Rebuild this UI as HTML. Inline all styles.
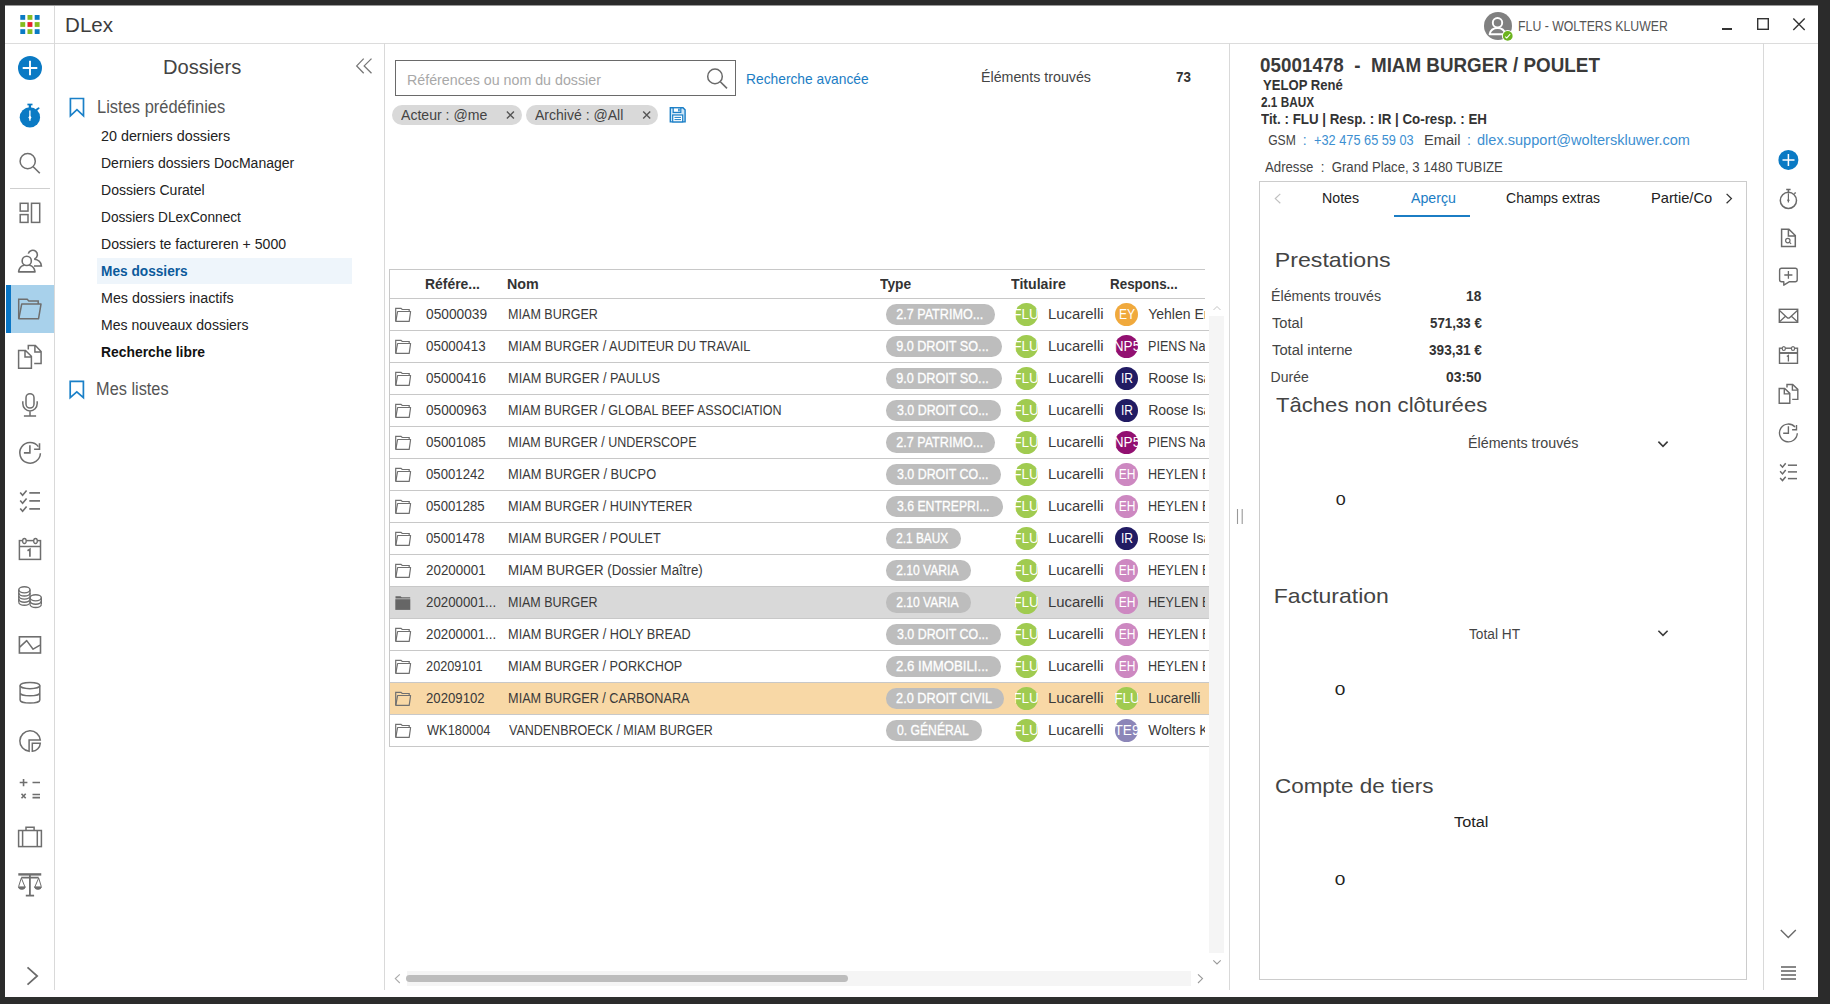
<!DOCTYPE html>
<html><head><meta charset="utf-8"><title>DLex</title>
<style>
html,body{margin:0;padding:0;width:1830px;height:1004px;overflow:hidden;background:#2b2b2b}
body{font-family:"Liberation Sans", sans-serif;position:relative}
#win{position:absolute;left:5px;top:5px;width:1813px;height:992px;background:#fff}
#lay{position:absolute;left:0;top:0;width:1830px;height:1004px}
</style></head><body>
<div id="win"></div>
<div id="lay">
<div style="position:absolute;left:5px;top:990px;width:1813px;height:7px;background:#fcfafc"></div>
<div style="position:absolute;left:5px;top:43px;width:1813px;height:1px;background:#dcdcdc"></div>
<div style="position:absolute;left:54px;top:5px;width:1px;height:985px;background:#d9d9d9"></div>
<div style="position:absolute;left:384px;top:43px;width:1px;height:947px;background:#d9d9d9"></div>
<div style="position:absolute;left:1229px;top:43px;width:1px;height:947px;background:#d9d9d9"></div>
<div style="position:absolute;left:1763px;top:43px;width:1px;height:947px;background:#d9d9d9"></div>
<div style="position:absolute;left:5px;top:5px;width:1813px;height:1px;background:#9a9a9a"></div>
<div style="position:absolute;left:1722px;top:28px;width:10px;height:2px;background:#333"></div>
<div style="position:absolute;left:10px;top:188px;width:40px;height:1px;background:#cfcfcf"></div>
<div style="position:absolute;left:6px;top:285px;width:48px;height:47.5px;background:#a8d1eb"></div>
<div style="position:absolute;left:6px;top:285px;width:5px;height:47.5px;background:#0a76c6"></div>
<div style="position:absolute;left:97px;top:258px;width:254.5px;height:26.3px;background:#eef5fb"></div>
<div style="position:absolute;left:395px;top:60px;width:341px;height:36px;border:1.5px solid #6a6a6a;box-sizing:border-box"></div>
<div style="position:absolute;left:391.9px;top:105.3px;width:129.7px;height:19.4px;background:#d9d9d9;border-radius:10px"></div>
<div style="position:absolute;left:526.1px;top:105.3px;width:132px;height:19.4px;background:#d9d9d9;border-radius:10px"></div>
<div style="position:absolute;left:389px;top:269px;width:816px;height:1px;background:#c8c8c8"></div>
<div style="position:absolute;left:389px;top:269px;width:1px;height:477.5px;background:#c8c8c8"></div>
<div style="position:absolute;left:389px;top:298px;width:816px;height:1px;background:#c8c8c8"></div>
<div style="position:absolute;left:390px;top:330px;width:819px;height:1px;background:#c8c8c8"></div>
<div style="position:absolute;left:886px;top:304.2px;width:109.4px;height:20.6px;background:#bdbdbd;border-radius:10.3px"></div>
<div style="position:absolute;left:1015px;top:303px;width:22.8px;height:22.8px;background:#a0cb50;border-radius:50%"></div>
<div style="position:absolute;left:1115.2px;top:303px;width:22.8px;height:22.8px;background:#f0a93c;border-radius:50%"></div>
<div style="position:absolute;left:390px;top:362px;width:819px;height:1px;background:#c8c8c8"></div>
<div style="position:absolute;left:886px;top:336.2px;width:115.6px;height:20.6px;background:#bdbdbd;border-radius:10.3px"></div>
<div style="position:absolute;left:1015px;top:335px;width:22.8px;height:22.8px;background:#a0cb50;border-radius:50%"></div>
<div style="position:absolute;left:1115.2px;top:335px;width:22.8px;height:22.8px;background:#921071;border-radius:50%"></div>
<div style="position:absolute;left:390px;top:394px;width:819px;height:1px;background:#c8c8c8"></div>
<div style="position:absolute;left:886px;top:368.2px;width:115.6px;height:20.6px;background:#bdbdbd;border-radius:10.3px"></div>
<div style="position:absolute;left:1015px;top:367px;width:22.8px;height:22.8px;background:#a0cb50;border-radius:50%"></div>
<div style="position:absolute;left:1115.2px;top:367px;width:22.8px;height:22.8px;background:#211b63;border-radius:50%"></div>
<div style="position:absolute;left:390px;top:426px;width:819px;height:1px;background:#c8c8c8"></div>
<div style="position:absolute;left:886px;top:400.2px;width:115px;height:20.6px;background:#bdbdbd;border-radius:10.3px"></div>
<div style="position:absolute;left:1015px;top:399px;width:22.8px;height:22.8px;background:#a0cb50;border-radius:50%"></div>
<div style="position:absolute;left:1115.2px;top:399px;width:22.8px;height:22.8px;background:#211b63;border-radius:50%"></div>
<div style="position:absolute;left:390px;top:458px;width:819px;height:1px;background:#c8c8c8"></div>
<div style="position:absolute;left:886px;top:432.2px;width:109.4px;height:20.6px;background:#bdbdbd;border-radius:10.3px"></div>
<div style="position:absolute;left:1015px;top:431px;width:22.8px;height:22.8px;background:#a0cb50;border-radius:50%"></div>
<div style="position:absolute;left:1115.2px;top:431px;width:22.8px;height:22.8px;background:#921071;border-radius:50%"></div>
<div style="position:absolute;left:390px;top:490px;width:819px;height:1px;background:#c8c8c8"></div>
<div style="position:absolute;left:886px;top:464.2px;width:115px;height:20.6px;background:#bdbdbd;border-radius:10.3px"></div>
<div style="position:absolute;left:1015px;top:463px;width:22.8px;height:22.8px;background:#a0cb50;border-radius:50%"></div>
<div style="position:absolute;left:1115.2px;top:463px;width:22.8px;height:22.8px;background:#cd88c1;border-radius:50%"></div>
<div style="position:absolute;left:390px;top:522px;width:819px;height:1px;background:#c8c8c8"></div>
<div style="position:absolute;left:886px;top:496.2px;width:116.6px;height:20.6px;background:#bdbdbd;border-radius:10.3px"></div>
<div style="position:absolute;left:1015px;top:495px;width:22.8px;height:22.8px;background:#a0cb50;border-radius:50%"></div>
<div style="position:absolute;left:1115.2px;top:495px;width:22.8px;height:22.8px;background:#cd88c1;border-radius:50%"></div>
<div style="position:absolute;left:390px;top:554px;width:819px;height:1px;background:#c8c8c8"></div>
<div style="position:absolute;left:886px;top:528.2px;width:75px;height:20.6px;background:#bdbdbd;border-radius:10.3px"></div>
<div style="position:absolute;left:1015px;top:527px;width:22.8px;height:22.8px;background:#a0cb50;border-radius:50%"></div>
<div style="position:absolute;left:1115.2px;top:527px;width:22.8px;height:22.8px;background:#211b63;border-radius:50%"></div>
<div style="position:absolute;left:390px;top:586px;width:819px;height:1px;background:#c8c8c8"></div>
<div style="position:absolute;left:886px;top:560.2px;width:85.4px;height:20.6px;background:#bdbdbd;border-radius:10.3px"></div>
<div style="position:absolute;left:1015px;top:559px;width:22.8px;height:22.8px;background:#a0cb50;border-radius:50%"></div>
<div style="position:absolute;left:1115.2px;top:559px;width:22.8px;height:22.8px;background:#cd88c1;border-radius:50%"></div>
<div style="position:absolute;left:390px;top:586.5px;width:819px;height:32px;background:#d9d9d9"></div>
<div style="position:absolute;left:390px;top:618px;width:819px;height:1px;background:#c8c8c8"></div>
<div style="position:absolute;left:886px;top:592.2px;width:85.4px;height:20.6px;background:#bdbdbd;border-radius:10.3px"></div>
<div style="position:absolute;left:1015px;top:591px;width:22.8px;height:22.8px;background:#a0cb50;border-radius:50%"></div>
<div style="position:absolute;left:1115.2px;top:591px;width:22.8px;height:22.8px;background:#cd88c1;border-radius:50%"></div>
<div style="position:absolute;left:390px;top:650px;width:819px;height:1px;background:#c8c8c8"></div>
<div style="position:absolute;left:886px;top:624.2px;width:115px;height:20.6px;background:#bdbdbd;border-radius:10.3px"></div>
<div style="position:absolute;left:1015px;top:623px;width:22.8px;height:22.8px;background:#a0cb50;border-radius:50%"></div>
<div style="position:absolute;left:1115.2px;top:623px;width:22.8px;height:22.8px;background:#cd88c1;border-radius:50%"></div>
<div style="position:absolute;left:390px;top:682px;width:819px;height:1px;background:#c8c8c8"></div>
<div style="position:absolute;left:886px;top:656.2px;width:115px;height:20.6px;background:#bdbdbd;border-radius:10.3px"></div>
<div style="position:absolute;left:1015px;top:655px;width:22.8px;height:22.8px;background:#a0cb50;border-radius:50%"></div>
<div style="position:absolute;left:1115.2px;top:655px;width:22.8px;height:22.8px;background:#cd88c1;border-radius:50%"></div>
<div style="position:absolute;left:390px;top:682.5px;width:819px;height:32px;background:#f8d8a6"></div>
<div style="position:absolute;left:390px;top:714px;width:819px;height:1px;background:#c8c8c8"></div>
<div style="position:absolute;left:886px;top:688.2px;width:118px;height:20.6px;background:#bdbdbd;border-radius:10.3px"></div>
<div style="position:absolute;left:1015px;top:687px;width:22.8px;height:22.8px;background:#a0cb50;border-radius:50%"></div>
<div style="position:absolute;left:1115.2px;top:687px;width:22.8px;height:22.8px;background:#a0cb50;border-radius:50%"></div>
<div style="position:absolute;left:390px;top:746px;width:819px;height:1px;background:#c8c8c8"></div>
<div style="position:absolute;left:886px;top:720.2px;width:95.7px;height:20.6px;background:#bdbdbd;border-radius:10.3px"></div>
<div style="position:absolute;left:1015px;top:719px;width:22.8px;height:22.8px;background:#a0cb50;border-radius:50%"></div>
<div style="position:absolute;left:1115.2px;top:719px;width:22.8px;height:22.8px;background:#8c86b8;border-radius:50%"></div>
<div style="position:absolute;left:1209px;top:316px;width:15px;height:637px;background:#f5f5f5"></div>
<div style="position:absolute;left:407px;top:971px;width:784px;height:15px;background:#f5f5f5"></div>
<div style="position:absolute;left:406px;top:975.4px;width:442px;height:6.8px;background:#bdbdbd;border-radius:3.4px"></div>
<div style="position:absolute;left:1259px;top:181px;width:488px;height:799px;border:1px solid #cccccc;box-sizing:border-box"></div>
<div style="position:absolute;left:1394px;top:214.6px;width:76px;height:2.4px;background:#1b7dc4"></div>
<div style="position:absolute;left:1780.5px;top:966.2px;width:15.8px;height:1.6px;background:#888"></div>
<div style="position:absolute;left:1780.5px;top:970.2px;width:15.8px;height:1.6px;background:#888"></div>
<div style="position:absolute;left:1780.5px;top:974.2px;width:15.8px;height:1.6px;background:#888"></div>
<div style="position:absolute;left:1780.5px;top:978.2px;width:15.8px;height:1.6px;background:#888"></div>
<svg width="1830" height="1004" style="position:absolute;left:0;top:0">
<rect x="20.30" y="15.00" width="4.9" height="4.8" fill="#0a7ac4"/>
<rect x="27.50" y="15.00" width="4.9" height="4.8" fill="#85bc20"/>
<rect x="34.70" y="15.00" width="4.9" height="4.8" fill="#0a7ac4"/>
<rect x="20.30" y="22.10" width="4.9" height="4.8" fill="#85bc20"/>
<rect x="27.50" y="22.10" width="4.9" height="4.8" fill="#e5202e"/>
<rect x="34.70" y="22.10" width="4.9" height="4.8" fill="#85bc20"/>
<rect x="20.30" y="29.20" width="4.9" height="4.8" fill="#0a7ac4"/>
<rect x="27.50" y="29.20" width="4.9" height="4.8" fill="#85bc20"/>
<rect x="34.70" y="29.20" width="4.9" height="4.8" fill="#0a7ac4"/>
<circle cx="1498" cy="26" r="14" fill="#808080"/>
<circle cx="1497.5" cy="22.7" r="4.7" fill="none" stroke="#fff" stroke-width="1.9"/>
<path d="M1489.6 34.3 C1490.5 30 1493.5 28 1497.5 28 C1501.5 28 1504.5 30 1505.4 34.3 Z" fill="none" stroke="#fff" stroke-width="1.9" stroke-linejoin="round"/>
<circle cx="1507.7" cy="35.9" r="5.8" fill="#fff"/>
<circle cx="1507.7" cy="35.9" r="4.9" fill="#6cb31e"/>
<path d="M1505.2 36.6 L1506.8 37.9 L1510.2 34.2" fill="none" stroke="#fff" stroke-width="1.1"/>
<rect x="1757.7" y="18.7" width="10.6" height="10.6" fill="none" stroke="#333" stroke-width="1.4"/>
<path d="M1793.3 18.6 L1804.7 30 M1804.7 18.6 L1793.3 30" stroke="#333" stroke-width="1.4"/>
<circle cx="30" cy="68" r="12" fill="#0a7ac4"/>
<path d="M22.7 68 H37.3 M30 60.7 V75.3" stroke="#fff" stroke-width="1.9"/>
<circle cx="29.9" cy="117.4" r="10.2" fill="#0a7ac4"/>
<path d="M27.4 104.5 H32.5" stroke="#0a7ac4" stroke-width="1.7"/><path d="M29.9 104.5 V108.5" stroke="#0a7ac4" stroke-width="2.3"/>
<path d="M36.4 109.8 L38.6 108.2" stroke="#0a7ac4" stroke-width="1.9" stroke-linecap="round"/>
<path d="M29.9 110.4 V120.7" stroke="#fff" stroke-width="1.3"/>
<path d="M28.3 117.5 L29.9 115.5 L31.5 117.5 L29.9 119.5 Z" fill="#fff"/>
<circle cx="27.7" cy="161.2" r="7.6" fill="none" stroke="#6e6e6e" stroke-width="1.5"/>
<path d="M33.2 166.7 L39.8 173.3" stroke="#6e6e6e" stroke-width="1.6"/>
<rect x="20.2" y="203.3" width="7.8" height="7.8" fill="none" stroke="#6e6e6e" stroke-width="1.5"/>
<rect x="20.2" y="214.6" width="7.8" height="7.8" fill="none" stroke="#6e6e6e" stroke-width="1.5"/>
<rect x="31.5" y="203.3" width="8.2" height="19.1" fill="none" stroke="#6e6e6e" stroke-width="1.5"/>
<circle cx="26.75" cy="260.9" r="4.6" fill="none" stroke="#6e6e6e" stroke-width="1.6"/>
<path d="M24.3 265.3 C22 265.6 19.2 267.8 18.6 271.9 H35 C34.4 267.8 31.6 265.6 29.2 265.3" fill="none" stroke="#6e6e6e" stroke-width="1.6" stroke-linejoin="round"/>
<path d="M28.3 253.6 A4.6 4.6 0 1 1 34.4 259.1" fill="none" stroke="#6e6e6e" stroke-width="1.6"/>
<path d="M34.2 259.3 C38 259.6 41 262 41.4 266 H34" fill="none" stroke="#6e6e6e" stroke-width="1.6"/>
<path d="M18.7 318.8 V299.3 H27.2 L28.8 301 H38.2 V304" fill="none" stroke="#6e6e6e" stroke-width="1.5"/>
<path d="M21.7 304.1 H41 L38.5 318.8 H18.8 Z" fill="none" stroke="#6e6e6e" stroke-width="1.5" stroke-linejoin="round"/>
<path d="M18.6 350.4 H25.5 L31.4 356.3 V368.2 H18.6 Z M25 350.6 V356.9 H31.4" fill="none" stroke="#6e6e6e" stroke-width="1.5"/>
<path d="M28.3 349.4 V345.6 H35.4 L41.1 351.5 V363.4 H34.2 M34.9 345.8 V352.1 H41.1" fill="none" stroke="#6e6e6e" stroke-width="1.5"/>
<rect x="26" y="393.7" width="8" height="14.4" rx="4" fill="none" stroke="#6e6e6e" stroke-width="1.5"/>
<path d="M22.8 401.2 V403.6 A7.2 7.4 0 0 0 37.2 403.6 V401.2 M30 411 V416.1 M23.9 416.1 H36.1" fill="none" stroke="#6e6e6e" stroke-width="1.5"/>
<path d="M40.4 453.3 A10.3 10.3 0 1 1 38.3 446.6" fill="none" stroke="#6e6e6e" stroke-width="1.5"/>
<path d="M39.5 443.2 V449.2 H34.1 M29.9 445.2 V452.9 H23.9" fill="none" stroke="#6e6e6e" stroke-width="1.6"/>
<path d="M20.2 492.4 L22.6 495.3 L26.6 490.5" fill="none" stroke="#6e6e6e" stroke-width="1.6"/>
<path d="M29.3 492.9 H40" stroke="#6e6e6e" stroke-width="1.7"/>
<path d="M20.2 500.4 L22.6 503.3 L26.6 498.5" fill="none" stroke="#6e6e6e" stroke-width="1.6"/>
<path d="M29.3 500.9 H40" stroke="#6e6e6e" stroke-width="1.7"/>
<path d="M20.2 508.4 L22.6 511.3 L26.6 506.5" fill="none" stroke="#6e6e6e" stroke-width="1.6"/>
<path d="M29.3 508.9 H40" stroke="#6e6e6e" stroke-width="1.7"/>
<rect x="19.4" y="540.6" width="21.1" height="18.8" fill="none" stroke="#6e6e6e" stroke-width="1.5"/>
<path d="M19.4 546.5 H40.5" stroke="#6e6e6e" stroke-width="1.5"/>
<ellipse cx="24.4" cy="541" rx="1.8" ry="2.5" fill="#fff" stroke="#6e6e6e" stroke-width="1.3"/>
<ellipse cx="35.5" cy="541" rx="1.8" ry="2.5" fill="#fff" stroke="#6e6e6e" stroke-width="1.3"/>
<path d="M27.5 550.8 L29.9 549.3 V556.7" fill="none" stroke="#6e6e6e" stroke-width="1.7"/>
<ellipse cx="24.4" cy="589.8" rx="5.6" ry="3.1" fill="#fff" stroke="#6e6e6e" stroke-width="1.4"/><path d="M18.799999999999997 592.9 A5.6 3.1 0 0 0 30.0 592.9" fill="none" stroke="#6e6e6e" stroke-width="1.4"/><path d="M18.799999999999997 596.0 A5.6 3.1 0 0 0 30.0 596.0" fill="none" stroke="#6e6e6e" stroke-width="1.4"/><path d="M18.799999999999997 599.0999999999999 A5.6 3.1 0 0 0 30.0 599.0999999999999" fill="none" stroke="#6e6e6e" stroke-width="1.4"/><path d="M18.799999999999997 602.1999999999999 A5.6 3.1 0 0 0 30.0 602.1999999999999" fill="none" stroke="#6e6e6e" stroke-width="1.4"/><path d="M18.799999999999997 589.8 V602.1999999999999 M30.0 589.8 V602.1999999999999" stroke="#6e6e6e" stroke-width="1.4"/>
<rect x="29.8" y="596" width="12" height="12" fill="#fff"/>
<ellipse cx="35.7" cy="597.8" rx="5.6" ry="3.1" fill="#fff" stroke="#6e6e6e" stroke-width="1.4"/><path d="M30.1 601.0999999999999 A5.6 3.1 0 0 0 41.300000000000004 601.0999999999999" fill="none" stroke="#6e6e6e" stroke-width="1.4"/><path d="M30.1 604.4 A5.6 3.1 0 0 0 41.300000000000004 604.4" fill="none" stroke="#6e6e6e" stroke-width="1.4"/><path d="M30.1 597.8 V604.4 M41.300000000000004 597.8 V604.4" stroke="#6e6e6e" stroke-width="1.4"/>
<rect x="19.4" y="636.8" width="21.1" height="16.2" fill="none" stroke="#6e6e6e" stroke-width="1.6"/>
<path d="M19.7 647.1 L26.7 640.6 L33.1 649.2 L40 645.2" fill="none" stroke="#6e6e6e" stroke-width="1.5" stroke-linejoin="round"/>
<ellipse cx="29.95" cy="685.6" rx="9.85" ry="3.1" fill="none" stroke="#6e6e6e" stroke-width="1.5"/>
<path d="M20.1 685.6 V700 A9.85 3.1 0 0 0 39.8 700 V685.6 M20.1 692.7 A9.85 3.1 0 0 0 39.8 692.7" fill="none" stroke="#6e6e6e" stroke-width="1.5"/>
<path d="M29.1 751.3 A10.25 10.25 0 1 1 40.3 740.1 H29.1 Z" fill="none" stroke="#6e6e6e" stroke-width="1.5" stroke-linejoin="miter"/>
<path d="M32.3 743.2 H40.3 A8.6 8.6 0 0 1 32.3 751.3 Z" fill="none" stroke="#6e6e6e" stroke-width="1.5"/>
<path d="M19.7 782.5 H27.4 M23.55 778.9 V786.2 M32.5 782.5 H40 M21.5 793.7 L25.7 798.2 M25.7 793.7 L21.5 798.2 M32.5 794.5 H40 M32.5 797.6 H40" stroke="#6e6e6e" stroke-width="1.6"/>
<rect x="18.6" y="830.5" width="22.8" height="16.1" fill="none" stroke="#6e6e6e" stroke-width="1.5"/>
<path d="M26 830.5 V827.3 H34.1 V830.5 M22.6 830.5 V846.6 M37.3 830.5 V846.6" fill="none" stroke="#6e6e6e" stroke-width="1.5"/>
<path d="M18.3 874.4 H41.25" stroke="#6e6e6e" stroke-width="2.4"/>
<path d="M21.2 877.6 H38.7 M29.9 874 V895.6 " stroke="#6e6e6e" stroke-width="1.8"/>
<path d="M25.8 895.6 H34.1" stroke="#6e6e6e" stroke-width="1.8"/>
<path d="M21.3 878 L18.6 886.6 M21.3 878 L25 887 M38.7 878 L34.8 887 M38.7 878 L41.3 886.6" stroke="#6e6e6e" stroke-width="1"/>
<path d="M18.4 886.9 H25.3 Q25 889.3 21.85 889.3 Q18.7 889.3 18.4 886.9 Z M34.5 886.9 H41.4 Q41.1 889.3 37.95 889.3 Q34.8 889.3 34.5 886.9 Z" fill="#6e6e6e" stroke="#6e6e6e" stroke-width="1"/>
<path d="M27.5 967.3 L37.2 976 L27.5 984.7" fill="none" stroke="#6a6a6a" stroke-width="1.7"/>
<path d="M363.7 58.6 L356.7 65.9 L363.7 73.3 M371.5 58.6 L364.2 65.9 L371.5 73.3" fill="none" stroke="#777" stroke-width="1.3"/>
<path d="M70.4 98.5 H83.5 V115.75 L76.95 109.6 L70.4 115.75 Z" fill="none" stroke="#1a80c8" stroke-width="1.7"/>
<path d="M70.2 381.3 H83.4 V397.6 L76.8 391.8 L70.2 397.6 Z" fill="none" stroke="#1a80c8" stroke-width="1.7"/>
<circle cx="715" cy="76.4" r="7.3" fill="none" stroke="#6a6a6a" stroke-width="1.5"/>
<path d="M720.3 81.7 L727 88.4" stroke="#6a6a6a" stroke-width="1.6"/>
<path d="M506.9 111.6 L513.9 118.6 M513.9 111.6 L506.9 118.6" stroke="#555" stroke-width="1.4"/>
<path d="M643.2 111.6 L650.2 118.6 M650.2 111.6 L643.2 118.6" stroke="#555" stroke-width="1.4"/>
<path d="M670.3 107.8 H683 L685.1 109.9 V121.9 H670.3 Z" fill="#cfe6f7" stroke="#1a7ec6" stroke-width="1.4"/>
<rect x="673.2" y="107.8" width="7.6" height="4.6" fill="#fff" stroke="#1a7ec6" stroke-width="1.2"/>
<rect x="678.2" y="108.6" width="1.5" height="2.8" fill="#1a7ec6"/>
<rect x="672.7" y="115" width="10" height="6.9" fill="#fff" stroke="#1a7ec6" stroke-width="1.2"/>
<path d="M674.5 117.4 H681 M674.5 119.6 H681" stroke="#1a7ec6" stroke-width="1"/>
<path d="M395.7 321.3 V308.3 H401 L402.2 309.5 H409.2 V311.3" fill="none" stroke="#707070" stroke-width="1.2"/>
<path d="M397.6 311.5 H410.6 L409.2 321.3 H395.8 Z" fill="none" stroke="#707070" stroke-width="1.2" stroke-linejoin="round"/>
<path d="M395.7 353.3 V340.3 H401 L402.2 341.5 H409.2 V343.3" fill="none" stroke="#707070" stroke-width="1.2"/>
<path d="M397.6 343.5 H410.6 L409.2 353.3 H395.8 Z" fill="none" stroke="#707070" stroke-width="1.2" stroke-linejoin="round"/>
<path d="M395.7 385.3 V372.3 H401 L402.2 373.5 H409.2 V375.3" fill="none" stroke="#707070" stroke-width="1.2"/>
<path d="M397.6 375.5 H410.6 L409.2 385.3 H395.8 Z" fill="none" stroke="#707070" stroke-width="1.2" stroke-linejoin="round"/>
<path d="M395.7 417.3 V404.3 H401 L402.2 405.5 H409.2 V407.3" fill="none" stroke="#707070" stroke-width="1.2"/>
<path d="M397.6 407.5 H410.6 L409.2 417.3 H395.8 Z" fill="none" stroke="#707070" stroke-width="1.2" stroke-linejoin="round"/>
<path d="M395.7 449.3 V436.3 H401 L402.2 437.5 H409.2 V439.3" fill="none" stroke="#707070" stroke-width="1.2"/>
<path d="M397.6 439.5 H410.6 L409.2 449.3 H395.8 Z" fill="none" stroke="#707070" stroke-width="1.2" stroke-linejoin="round"/>
<path d="M395.7 481.3 V468.3 H401 L402.2 469.5 H409.2 V471.3" fill="none" stroke="#707070" stroke-width="1.2"/>
<path d="M397.6 471.5 H410.6 L409.2 481.3 H395.8 Z" fill="none" stroke="#707070" stroke-width="1.2" stroke-linejoin="round"/>
<path d="M395.7 513.3 V500.3 H401 L402.2 501.5 H409.2 V503.3" fill="none" stroke="#707070" stroke-width="1.2"/>
<path d="M397.6 503.5 H410.6 L409.2 513.3 H395.8 Z" fill="none" stroke="#707070" stroke-width="1.2" stroke-linejoin="round"/>
<path d="M395.7 545.3 V532.3 H401 L402.2 533.5 H409.2 V535.3" fill="none" stroke="#707070" stroke-width="1.2"/>
<path d="M397.6 535.5 H410.6 L409.2 545.3 H395.8 Z" fill="none" stroke="#707070" stroke-width="1.2" stroke-linejoin="round"/>
<path d="M395.7 577.3 V564.3 H401 L402.2 565.5 H409.2 V567.3" fill="none" stroke="#707070" stroke-width="1.2"/>
<path d="M397.6 567.5 H410.6 L409.2 577.3 H395.8 Z" fill="none" stroke="#707070" stroke-width="1.2" stroke-linejoin="round"/>
<path d="M395.5 596.2 H400.5 L401.7 597.3 H410.2 V598.4 H395.5 Z" fill="#666"/>
<rect x="395.3" y="599.2" width="15" height="10.7" fill="#666"/>
<path d="M395.7 641.3 V628.3 H401 L402.2 629.5 H409.2 V631.3" fill="none" stroke="#707070" stroke-width="1.2"/>
<path d="M397.6 631.5 H410.6 L409.2 641.3 H395.8 Z" fill="none" stroke="#707070" stroke-width="1.2" stroke-linejoin="round"/>
<path d="M395.7 673.3 V660.3 H401 L402.2 661.5 H409.2 V663.3" fill="none" stroke="#707070" stroke-width="1.2"/>
<path d="M397.6 663.5 H410.6 L409.2 673.3 H395.8 Z" fill="none" stroke="#707070" stroke-width="1.2" stroke-linejoin="round"/>
<path d="M395.7 705.3 V692.3 H401 L402.2 693.5 H409.2 V695.3" fill="none" stroke="#707070" stroke-width="1.2"/>
<path d="M397.6 695.5 H410.6 L409.2 705.3 H395.8 Z" fill="none" stroke="#707070" stroke-width="1.2" stroke-linejoin="round"/>
<path d="M395.7 737.3 V724.3 H401 L402.2 725.5 H409.2 V727.3" fill="none" stroke="#707070" stroke-width="1.2"/>
<path d="M397.6 727.5 H410.6 L409.2 737.3 H395.8 Z" fill="none" stroke="#707070" stroke-width="1.2" stroke-linejoin="round"/>
<path d="M1213.5 310 L1217 306.5 L1220.5 310" fill="none" stroke="#c4c4c4" stroke-width="1"/>
<path d="M1213.3 960.3 L1217 964 L1220.7 960.3" fill="none" stroke="#999" stroke-width="1.1"/>
<path d="M399.8 974.3 L395.3 978.6 L399.8 983" fill="none" stroke="#aaa" stroke-width="1.1"/>
<path d="M1198 974.3 L1202.5 978.6 L1198 983" fill="none" stroke="#999" stroke-width="1.1"/>
<path d="M1237.5 509 V524 M1242.2 509 V524" stroke="#999" stroke-width="1.1"/>
<path d="M1280.3 193.9 L1275.3 198.6 L1280.3 203.3" fill="none" stroke="#c0c0c0" stroke-width="1.2"/>
<path d="M1726.6 193.9 L1731.4 198.6 L1726.6 203.3" fill="none" stroke="#333" stroke-width="1.3"/>
<path d="M1658.4 441.6 L1663 446.3 L1667.6 441.6" fill="none" stroke="#3a3a3a" stroke-width="1.6"/>
<path d="M1658.4 630.8 L1663 635.4 L1667.6 630.8" fill="none" stroke="#3a3a3a" stroke-width="1.6"/>
<circle cx="1788.4" cy="159.9" r="10" fill="#0a7ac4"/>
<path d="M1782.5 160.1 H1794.5 M1788.4 154.1 V166.1" stroke="#fff" stroke-width="1.5"/>
<circle cx="1788.4" cy="200.4" r="8.1" fill="none" stroke="#6a6a6a" stroke-width="1.5"/>
<path d="M1786.2 189.4 H1790.6 M1788.4 189.4 V192.3 M1794.3 193.8 L1795.7 192.5" stroke="#6a6a6a" stroke-width="1.5"/>
<path d="M1788.4 193.2 V202.6" stroke="#6a6a6a" stroke-width="1.2"/>
<path d="M1787.1 200.3 L1788.4 198.6 L1789.7 200.3 L1788.4 202 Z" fill="#6a6a6a"/>
<path d="M1781.6 229.3 H1788.9 L1795.3 235.5 V246.5 H1781.6 Z M1788.4 229.6 V236 H1795.3" fill="none" stroke="#6a6a6a" stroke-width="1.5"/>
<circle cx="1787.8" cy="240.6" r="2.2" fill="none" stroke="#6a6a6a" stroke-width="1.2"/><path d="M1789.4 242.2 L1791.1 243.9" stroke="#6a6a6a" stroke-width="1.2"/>
<path d="M1781.6 268.3 H1795.2 Q1797.2 268.3 1797.2 270.3 V279.7 Q1797.2 281.7 1795.2 281.7 H1789.5 L1783.8 285.2 V281.7 H1781.6 Q1779.6 281.7 1779.6 279.7 V270.3 Q1779.6 268.3 1781.6 268.3 Z" fill="none" stroke="#6a6a6a" stroke-width="1.4" stroke-linejoin="round"/>
<path d="M1784.3 275 H1792.4 M1788.4 271 V278.8" stroke="#6a6a6a" stroke-width="1.3"/>
<rect x="1779.3" y="309.3" width="18.4" height="13" fill="none" stroke="#6a6a6a" stroke-width="1.4"/>
<path d="M1779.5 310.5 L1787 317.5 Q1788.4 318.8 1789.8 317.5 L1797.4 310.5 M1779.5 321.7 L1785.2 316.6 M1797.4 321.7 L1791.7 316.6" fill="none" stroke="#6a6a6a" stroke-width="1.3"/>
<rect x="1779.5" y="348.2" width="18" height="15.1" fill="none" stroke="#6a6a6a" stroke-width="1.4"/>
<path d="M1779.5 353 H1797.5" stroke="#6a6a6a" stroke-width="1.9"/>
<ellipse cx="1783.8" cy="348.6" rx="1.6" ry="1.9" fill="#fff" stroke="#6a6a6a" stroke-width="1.2"/><ellipse cx="1793" cy="348.6" rx="1.6" ry="1.9" fill="#fff" stroke="#6a6a6a" stroke-width="1.2"/>
<path d="M1786.8 356.5 L1788.4 355.5 V361.6" fill="none" stroke="#6a6a6a" stroke-width="1.3"/>
<path d="M1779.2 388.5 H1784.7 L1789.8 393.4 V403.3 H1779.2 Z M1784.3 388.7 V393.9 H1789.8" fill="none" stroke="#6a6a6a" stroke-width="1.4"/>
<path d="M1787 387.6 V384.5 H1792.7 L1797.8 389.4 V399.4 H1792.2 M1792.4 384.7 V390.1 H1797.8" fill="none" stroke="#6a6a6a" stroke-width="1.4"/>
<path d="M1797.3 433.3 A8.9 8.9 0 1 1 1795 427" fill="none" stroke="#6a6a6a" stroke-width="1.4"/>
<path d="M1796.5 424.9 V429.7 H1792.1 M1788.4 426.2 V433.2 H1783.2" fill="none" stroke="#6a6a6a" stroke-width="1.4"/>
<path d="M1780.1 464.6 L1782.5 467.2 L1785.7 463.3" fill="none" stroke="#6a6a6a" stroke-width="1.5"/>
<path d="M1787.9 465.2 H1797" stroke="#6a6a6a" stroke-width="1.5"/>
<path d="M1780.1 471.3 L1782.5 473.9 L1785.7 470.0" fill="none" stroke="#6a6a6a" stroke-width="1.5"/>
<path d="M1787.9 471.9 H1797" stroke="#6a6a6a" stroke-width="1.5"/>
<path d="M1780.1 478.0 L1782.5 480.59999999999997 L1785.7 476.7" fill="none" stroke="#6a6a6a" stroke-width="1.5"/>
<path d="M1787.9 478.59999999999997 H1797" stroke="#6a6a6a" stroke-width="1.5"/>
<path d="M1780.8 930 L1788.3 937.5 L1795.8 930" fill="none" stroke="#6a6a6a" stroke-width="1.4"/>
</svg>
<div id="t0" style="left:65.1px;position:absolute;top:13.95px;font-size:21px;line-height:21px;color:#3c3c3c;font-weight:400;white-space:nowrap;;transform:scaleX(0.9787);transform-origin:2px 0;">DLex</div>
<div id="t1" style="left:1518.1px;position:absolute;top:19.20px;font-size:14px;line-height:14px;color:#555;font-weight:400;white-space:nowrap;;transform:scaleX(0.8757);transform-origin:1px 0;">FLU - WOLTERS KLUWER</div>
<div id="t2" style="left:162.6px;position:absolute;top:57.00px;font-size:20px;line-height:20px;color:#444;font-weight:400;white-space:nowrap;;transform:scaleX(1.0053);transform-origin:2px 0;">Dossiers</div>
<div id="t3" style="left:97.3px;position:absolute;top:99.12px;font-size:17.5px;line-height:17.5px;color:#555;font-weight:400;white-space:nowrap;;transform:scaleX(0.9407);transform-origin:1px 0;">Listes prédéfinies</div>
<div id="t4" style="left:100.9px;position:absolute;top:129.10px;font-size:14px;line-height:14px;color:#222;font-weight:400;white-space:nowrap;;transform:scaleX(1.0240);transform-origin:1px 0;">20 derniers dossiers</div>
<div id="t5" style="left:100.9px;position:absolute;top:156.10px;font-size:14px;line-height:14px;color:#222;font-weight:400;white-space:nowrap;;transform:scaleX(1.0016);transform-origin:1px 0;">Derniers dossiers DocManager</div>
<div id="t6" style="left:100.9px;position:absolute;top:183.10px;font-size:14px;line-height:14px;color:#222;font-weight:400;white-space:nowrap;;transform:scaleX(1.0020);transform-origin:1px 0;">Dossiers Curatel</div>
<div id="t7" style="left:100.9px;position:absolute;top:210.10px;font-size:14px;line-height:14px;color:#222;font-weight:400;white-space:nowrap;;transform:scaleX(0.9768);transform-origin:1px 0;">Dossiers DLexConnect</div>
<div id="t8" style="left:100.9px;position:absolute;top:237.10px;font-size:14px;line-height:14px;color:#222;font-weight:400;white-space:nowrap;;transform:scaleX(1.0055);transform-origin:1px 0;">Dossiers te factureren + 5000</div>
<div id="t9" style="left:100.9px;position:absolute;top:264.10px;font-size:14px;line-height:14px;color:#0b5a9b;font-weight:700;white-space:nowrap;;transform:scaleX(0.9770);transform-origin:1px 0;">Mes dossiers</div>
<div id="t10" style="left:100.9px;position:absolute;top:291.10px;font-size:14px;line-height:14px;color:#222;font-weight:400;white-space:nowrap;;transform:scaleX(1.0209);transform-origin:1px 0;">Mes dossiers inactifs</div>
<div id="t11" style="left:100.9px;position:absolute;top:318.10px;font-size:14px;line-height:14px;color:#222;font-weight:400;white-space:nowrap;;transform:scaleX(1.0034);transform-origin:1px 0;">Mes nouveaux dossiers</div>
<div id="t12" style="left:100.9px;position:absolute;top:345.10px;font-size:14px;line-height:14px;color:#111;font-weight:700;white-space:nowrap;;transform:scaleX(0.9904);transform-origin:1px 0;">Recherche libre</div>
<div id="t13" style="left:96.3px;position:absolute;top:381.12px;font-size:17.5px;line-height:17.5px;color:#555;font-weight:400;white-space:nowrap;;transform:scaleX(0.9316);transform-origin:1px 0;">Mes listes</div>
<div id="t14" style="left:406.7px;position:absolute;top:72.35px;font-size:15px;line-height:15px;color:#a8a8a8;font-weight:400;white-space:nowrap;;transform:scaleX(0.9488);transform-origin:1px 0;">Références ou nom du dossier</div>
<div id="t15" style="left:746.4px;position:absolute;top:70.95px;font-size:15px;line-height:15px;color:#1b7dc4;font-weight:400;white-space:nowrap;;transform:scaleX(0.9182);transform-origin:1px 0;">Recherche avancée</div>
<div id="t16" style="left:400.6px;position:absolute;top:107.60px;font-size:14px;line-height:14px;color:#444;font-weight:400;white-space:nowrap;;transform:scaleX(1.0059);transform-origin:0px 0;">Acteur : @me</div>
<div id="t17" style="left:535.4px;position:absolute;top:107.60px;font-size:14px;line-height:14px;color:#444;font-weight:400;white-space:nowrap;;transform:scaleX(1.0023);transform-origin:0px 0;">Archivé : @All</div>
<div id="t18" style="left:980.6px;position:absolute;top:69.80px;font-size:14px;line-height:14px;color:#444;font-weight:400;white-space:nowrap;;transform:scaleX(1.0168);transform-origin:1px 0;">Éléments trouvés</div>
<div id="t19" style="left:1176.4px;position:absolute;top:69.80px;font-size:14px;line-height:14px;color:#333;font-weight:700;white-space:nowrap;;transform:scaleX(0.9571);transform-origin:1px 0;">73</div>
<div id="t20" style="left:425.2px;position:absolute;top:277.10px;font-size:14px;line-height:14px;color:#333;font-weight:700;white-space:nowrap;;transform:scaleX(0.9943);transform-origin:1px 0;">Référe...</div>
<div id="t21" style="left:507.0px;position:absolute;top:277.10px;font-size:14px;line-height:14px;color:#333;font-weight:700;white-space:nowrap;;transform:scaleX(1.0207);transform-origin:1px 0;">Nom</div>
<div id="t22" style="left:879.9px;position:absolute;top:277.10px;font-size:14px;line-height:14px;color:#333;font-weight:700;white-space:nowrap;;transform:scaleX(0.9839);transform-origin:0px 0;">Type</div>
<div id="t23" style="left:1011.1px;position:absolute;top:277.10px;font-size:14px;line-height:14px;color:#333;font-weight:700;white-space:nowrap;;transform:scaleX(1.0111);transform-origin:0px 0;">Titulaire</div>
<div id="t24" style="left:1110.2px;position:absolute;top:277.10px;font-size:14px;line-height:14px;color:#333;font-weight:700;white-space:nowrap;;transform:scaleX(0.9565);transform-origin:1px 0;">Respons...</div>
<div id="t25" style="left:426.1px;position:absolute;top:307.30px;font-size:14px;line-height:14px;color:#3a3a3a;font-weight:400;white-space:nowrap;;transform:scaleX(0.9803);transform-origin:1px 0;">05000039</div>
<div id="t26" style="left:508.0px;position:absolute;top:307.30px;font-size:14px;line-height:14px;color:#3a3a3a;font-weight:400;white-space:nowrap;;transform:scaleX(0.8949);transform-origin:1px 0;">MIAM BURGER</div>
<div id="t27" style="left:895.9px;position:absolute;top:306.88px;font-size:14.5px;line-height:14.5px;color:#fff;font-weight:400;white-space:nowrap;-webkit-text-stroke:0.3px #fff;transform:scaleX(0.8694);transform-origin:1px 0;">2.7 PATRIMO...</div>
<div id="t28" style="position:absolute;left:1015px;top:307.10px;width:22.80px;height:18.2px;overflow:hidden;font-size:14px;line-height:14px;color:#fff;font-weight:400;white-space:nowrap;border-radius:0"><div style="position:absolute;left:11.40px;top:0;font-size:14px;line-height:14px;transform:translateX(-50%) scaleX(0.97);transform-origin:50% 0">FLU</div></div>
<div id="t29" style="left:1048.4px;position:absolute;top:307.10px;font-size:14px;line-height:14px;color:#3a3a3a;font-weight:400;white-space:nowrap;;transform:scaleX(1.0660);transform-origin:1px 0;">Lucarelli</div>
<div id="t30" style="position:absolute;left:1115.2px;top:307.10px;width:22.80px;height:18.2px;overflow:hidden;font-size:14px;line-height:14px;color:#fff;font-weight:400;white-space:nowrap;border-radius:0"><div style="position:absolute;left:11.40px;top:0;font-size:14px;line-height:14px;transform:translateX(-50%) scaleX(0.86);transform-origin:50% 0">EY</div></div>
<div id="t31" style="position:absolute;left:1100px;top:307.10px;width:105.00px;height:18.2px;overflow:hidden;font-size:14px;line-height:14px;color:#3a3a3a;font-weight:400;white-space:nowrap"><span style="position:absolute;left:48.20px;top:0;">Yehlen Er</span></div>
<div id="t32" style="left:426.1px;position:absolute;top:339.30px;font-size:14px;line-height:14px;color:#3a3a3a;font-weight:400;white-space:nowrap;;transform:scaleX(0.9557);transform-origin:1px 0;">05000413</div>
<div id="t33" style="left:508.0px;position:absolute;top:339.30px;font-size:14px;line-height:14px;color:#3a3a3a;font-weight:400;white-space:nowrap;;transform:scaleX(0.9079);transform-origin:1px 0;">MIAM BURGER / AUDITEUR DU TRAVAIL</div>
<div id="t34" style="left:895.9px;position:absolute;top:338.88px;font-size:14.5px;line-height:14.5px;color:#fff;font-weight:400;white-space:nowrap;-webkit-text-stroke:0.3px #fff;transform:scaleX(0.8721);transform-origin:1px 0;">9.0 DROIT SO...</div>
<div id="t35" style="position:absolute;left:1015px;top:339.10px;width:22.80px;height:18.2px;overflow:hidden;font-size:14px;line-height:14px;color:#fff;font-weight:400;white-space:nowrap;border-radius:0"><div style="position:absolute;left:11.40px;top:0;font-size:14px;line-height:14px;transform:translateX(-50%) scaleX(0.97);transform-origin:50% 0">FLU</div></div>
<div id="t36" style="left:1048.4px;position:absolute;top:339.10px;font-size:14px;line-height:14px;color:#3a3a3a;font-weight:400;white-space:nowrap;;transform:scaleX(1.0660);transform-origin:1px 0;">Lucarelli</div>
<div id="t37" style="position:absolute;left:1115.2px;top:339.10px;width:22.80px;height:18.2px;overflow:hidden;font-size:14px;line-height:14px;color:#fff;font-weight:400;white-space:nowrap;border-radius:0"><div style="position:absolute;left:11.40px;top:0;font-size:14px;line-height:14px;transform:translateX(-50%) scaleX(0.97);transform-origin:50% 0">NP5</div></div>
<div id="t38" style="position:absolute;left:1100px;top:339.10px;width:105.00px;height:18.2px;overflow:hidden;font-size:14px;line-height:14px;color:#3a3a3a;font-weight:400;white-space:nowrap"><span style="position:absolute;left:48.20px;top:0;transform:scaleX(0.9);transform-origin:0 0">PIENS Na</span></div>
<div id="t39" style="left:426.1px;position:absolute;top:371.30px;font-size:14px;line-height:14px;color:#3a3a3a;font-weight:400;white-space:nowrap;;transform:scaleX(0.9639);transform-origin:1px 0;">05000416</div>
<div id="t40" style="left:508.0px;position:absolute;top:371.30px;font-size:14px;line-height:14px;color:#3a3a3a;font-weight:400;white-space:nowrap;;transform:scaleX(0.9096);transform-origin:1px 0;">MIAM BURGER / PAULUS</div>
<div id="t41" style="left:895.9px;position:absolute;top:370.88px;font-size:14.5px;line-height:14.5px;color:#fff;font-weight:400;white-space:nowrap;-webkit-text-stroke:0.3px #fff;transform:scaleX(0.8721);transform-origin:1px 0;">9.0 DROIT SO...</div>
<div id="t42" style="position:absolute;left:1015px;top:371.10px;width:22.80px;height:18.2px;overflow:hidden;font-size:14px;line-height:14px;color:#fff;font-weight:400;white-space:nowrap;border-radius:0"><div style="position:absolute;left:11.40px;top:0;font-size:14px;line-height:14px;transform:translateX(-50%) scaleX(0.97);transform-origin:50% 0">FLU</div></div>
<div id="t43" style="left:1048.4px;position:absolute;top:371.10px;font-size:14px;line-height:14px;color:#3a3a3a;font-weight:400;white-space:nowrap;;transform:scaleX(1.0660);transform-origin:1px 0;">Lucarelli</div>
<div id="t44" style="position:absolute;left:1115.2px;top:371.10px;width:22.80px;height:18.2px;overflow:hidden;font-size:14px;line-height:14px;color:#fff;font-weight:400;white-space:nowrap;border-radius:0"><div style="position:absolute;left:11.40px;top:0;font-size:14px;line-height:14px;transform:translateX(-50%) scaleX(0.86);transform-origin:50% 0">IR</div></div>
<div id="t45" style="position:absolute;left:1100px;top:371.10px;width:105.00px;height:18.2px;overflow:hidden;font-size:14px;line-height:14px;color:#3a3a3a;font-weight:400;white-space:nowrap"><span style="position:absolute;left:48.20px;top:0;">Roose Isa</span></div>
<div id="t46" style="left:426.1px;position:absolute;top:403.30px;font-size:14px;line-height:14px;color:#3a3a3a;font-weight:400;white-space:nowrap;;transform:scaleX(0.9721);transform-origin:1px 0;">05000963</div>
<div id="t47" style="left:508.0px;position:absolute;top:403.30px;font-size:14px;line-height:14px;color:#3a3a3a;font-weight:400;white-space:nowrap;;transform:scaleX(0.8944);transform-origin:1px 0;">MIAM BURGER / GLOBAL BEEF ASSOCIATION</div>
<div id="t48" style="left:896.9px;position:absolute;top:402.88px;font-size:14.5px;line-height:14.5px;color:#fff;font-weight:400;white-space:nowrap;-webkit-text-stroke:0.3px #fff;transform:scaleX(0.8557);transform-origin:0px 0;">3.0 DROIT CO...</div>
<div id="t49" style="position:absolute;left:1015px;top:403.10px;width:22.80px;height:18.2px;overflow:hidden;font-size:14px;line-height:14px;color:#fff;font-weight:400;white-space:nowrap;border-radius:0"><div style="position:absolute;left:11.40px;top:0;font-size:14px;line-height:14px;transform:translateX(-50%) scaleX(0.97);transform-origin:50% 0">FLU</div></div>
<div id="t50" style="left:1048.4px;position:absolute;top:403.10px;font-size:14px;line-height:14px;color:#3a3a3a;font-weight:400;white-space:nowrap;;transform:scaleX(1.0660);transform-origin:1px 0;">Lucarelli</div>
<div id="t51" style="position:absolute;left:1115.2px;top:403.10px;width:22.80px;height:18.2px;overflow:hidden;font-size:14px;line-height:14px;color:#fff;font-weight:400;white-space:nowrap;border-radius:0"><div style="position:absolute;left:11.40px;top:0;font-size:14px;line-height:14px;transform:translateX(-50%) scaleX(0.86);transform-origin:50% 0">IR</div></div>
<div id="t52" style="position:absolute;left:1100px;top:403.10px;width:105.00px;height:18.2px;overflow:hidden;font-size:14px;line-height:14px;color:#3a3a3a;font-weight:400;white-space:nowrap"><span style="position:absolute;left:48.20px;top:0;">Roose Isa</span></div>
<div id="t53" style="left:426.1px;position:absolute;top:435.30px;font-size:14px;line-height:14px;color:#3a3a3a;font-weight:400;white-space:nowrap;;transform:scaleX(0.9557);transform-origin:1px 0;">05001085</div>
<div id="t54" style="left:508.0px;position:absolute;top:435.30px;font-size:14px;line-height:14px;color:#3a3a3a;font-weight:400;white-space:nowrap;;transform:scaleX(0.8938);transform-origin:1px 0;">MIAM BURGER / UNDERSCOPE</div>
<div id="t55" style="left:895.9px;position:absolute;top:434.88px;font-size:14.5px;line-height:14.5px;color:#fff;font-weight:400;white-space:nowrap;-webkit-text-stroke:0.3px #fff;transform:scaleX(0.8694);transform-origin:1px 0;">2.7 PATRIMO...</div>
<div id="t56" style="position:absolute;left:1015px;top:435.10px;width:22.80px;height:18.2px;overflow:hidden;font-size:14px;line-height:14px;color:#fff;font-weight:400;white-space:nowrap;border-radius:0"><div style="position:absolute;left:11.40px;top:0;font-size:14px;line-height:14px;transform:translateX(-50%) scaleX(0.97);transform-origin:50% 0">FLU</div></div>
<div id="t57" style="left:1048.4px;position:absolute;top:435.10px;font-size:14px;line-height:14px;color:#3a3a3a;font-weight:400;white-space:nowrap;;transform:scaleX(1.0660);transform-origin:1px 0;">Lucarelli</div>
<div id="t58" style="position:absolute;left:1115.2px;top:435.10px;width:22.80px;height:18.2px;overflow:hidden;font-size:14px;line-height:14px;color:#fff;font-weight:400;white-space:nowrap;border-radius:0"><div style="position:absolute;left:11.40px;top:0;font-size:14px;line-height:14px;transform:translateX(-50%) scaleX(0.97);transform-origin:50% 0">NP5</div></div>
<div id="t59" style="position:absolute;left:1100px;top:435.10px;width:105.00px;height:18.2px;overflow:hidden;font-size:14px;line-height:14px;color:#3a3a3a;font-weight:400;white-space:nowrap"><span style="position:absolute;left:48.20px;top:0;transform:scaleX(0.9);transform-origin:0 0">PIENS Na</span></div>
<div id="t60" style="left:426.1px;position:absolute;top:467.30px;font-size:14px;line-height:14px;color:#3a3a3a;font-weight:400;white-space:nowrap;;transform:scaleX(0.9393);transform-origin:1px 0;">05001242</div>
<div id="t61" style="left:508.0px;position:absolute;top:467.30px;font-size:14px;line-height:14px;color:#3a3a3a;font-weight:400;white-space:nowrap;;transform:scaleX(0.9150);transform-origin:1px 0;">MIAM BURGER / BUCPO</div>
<div id="t62" style="left:896.9px;position:absolute;top:466.88px;font-size:14.5px;line-height:14.5px;color:#fff;font-weight:400;white-space:nowrap;-webkit-text-stroke:0.3px #fff;transform:scaleX(0.8557);transform-origin:0px 0;">3.0 DROIT CO...</div>
<div id="t63" style="position:absolute;left:1015px;top:467.10px;width:22.80px;height:18.2px;overflow:hidden;font-size:14px;line-height:14px;color:#fff;font-weight:400;white-space:nowrap;border-radius:0"><div style="position:absolute;left:11.40px;top:0;font-size:14px;line-height:14px;transform:translateX(-50%) scaleX(0.97);transform-origin:50% 0">FLU</div></div>
<div id="t64" style="left:1048.4px;position:absolute;top:467.10px;font-size:14px;line-height:14px;color:#3a3a3a;font-weight:400;white-space:nowrap;;transform:scaleX(1.0660);transform-origin:1px 0;">Lucarelli</div>
<div id="t65" style="position:absolute;left:1115.2px;top:467.10px;width:22.80px;height:18.2px;overflow:hidden;font-size:14px;line-height:14px;color:#fff;font-weight:400;white-space:nowrap;border-radius:0"><div style="position:absolute;left:11.40px;top:0;font-size:14px;line-height:14px;transform:translateX(-50%) scaleX(0.86);transform-origin:50% 0">EH</div></div>
<div id="t66" style="position:absolute;left:1100px;top:467.10px;width:105.00px;height:18.2px;overflow:hidden;font-size:14px;line-height:14px;color:#3a3a3a;font-weight:400;white-space:nowrap"><span style="position:absolute;left:48.20px;top:0;transform:scaleX(0.9);transform-origin:0 0">HEYLEN E</span></div>
<div id="t67" style="left:426.1px;position:absolute;top:499.30px;font-size:14px;line-height:14px;color:#3a3a3a;font-weight:400;white-space:nowrap;;transform:scaleX(0.9393);transform-origin:1px 0;">05001285</div>
<div id="t68" style="left:508.0px;position:absolute;top:499.30px;font-size:14px;line-height:14px;color:#3a3a3a;font-weight:400;white-space:nowrap;;transform:scaleX(0.9080);transform-origin:1px 0;">MIAM BURGER / HUINYTERER</div>
<div id="t69" style="left:896.9px;position:absolute;top:498.88px;font-size:14.5px;line-height:14.5px;color:#fff;font-weight:400;white-space:nowrap;-webkit-text-stroke:0.3px #fff;transform:scaleX(0.8440);transform-origin:0px 0;">3.6 ENTREPRI...</div>
<div id="t70" style="position:absolute;left:1015px;top:499.10px;width:22.80px;height:18.2px;overflow:hidden;font-size:14px;line-height:14px;color:#fff;font-weight:400;white-space:nowrap;border-radius:0"><div style="position:absolute;left:11.40px;top:0;font-size:14px;line-height:14px;transform:translateX(-50%) scaleX(0.97);transform-origin:50% 0">FLU</div></div>
<div id="t71" style="left:1048.4px;position:absolute;top:499.10px;font-size:14px;line-height:14px;color:#3a3a3a;font-weight:400;white-space:nowrap;;transform:scaleX(1.0660);transform-origin:1px 0;">Lucarelli</div>
<div id="t72" style="position:absolute;left:1115.2px;top:499.10px;width:22.80px;height:18.2px;overflow:hidden;font-size:14px;line-height:14px;color:#fff;font-weight:400;white-space:nowrap;border-radius:0"><div style="position:absolute;left:11.40px;top:0;font-size:14px;line-height:14px;transform:translateX(-50%) scaleX(0.86);transform-origin:50% 0">EH</div></div>
<div id="t73" style="position:absolute;left:1100px;top:499.10px;width:105.00px;height:18.2px;overflow:hidden;font-size:14px;line-height:14px;color:#3a3a3a;font-weight:400;white-space:nowrap"><span style="position:absolute;left:48.20px;top:0;transform:scaleX(0.9);transform-origin:0 0">HEYLEN E</span></div>
<div id="t74" style="left:426.1px;position:absolute;top:531.30px;font-size:14px;line-height:14px;color:#3a3a3a;font-weight:400;white-space:nowrap;;transform:scaleX(0.9393);transform-origin:1px 0;">05001478</div>
<div id="t75" style="left:508.0px;position:absolute;top:531.30px;font-size:14px;line-height:14px;color:#3a3a3a;font-weight:400;white-space:nowrap;;transform:scaleX(0.9084);transform-origin:1px 0;">MIAM BURGER / POULET</div>
<div id="t76" style="left:895.9px;position:absolute;top:530.88px;font-size:14.5px;line-height:14.5px;color:#fff;font-weight:400;white-space:nowrap;-webkit-text-stroke:0.3px #fff;transform:scaleX(0.8145);transform-origin:1px 0;">2.1 BAUX</div>
<div id="t77" style="position:absolute;left:1015px;top:531.10px;width:22.80px;height:18.2px;overflow:hidden;font-size:14px;line-height:14px;color:#fff;font-weight:400;white-space:nowrap;border-radius:0"><div style="position:absolute;left:11.40px;top:0;font-size:14px;line-height:14px;transform:translateX(-50%) scaleX(0.97);transform-origin:50% 0">FLU</div></div>
<div id="t78" style="left:1048.4px;position:absolute;top:531.10px;font-size:14px;line-height:14px;color:#3a3a3a;font-weight:400;white-space:nowrap;;transform:scaleX(1.0660);transform-origin:1px 0;">Lucarelli</div>
<div id="t79" style="position:absolute;left:1115.2px;top:531.10px;width:22.80px;height:18.2px;overflow:hidden;font-size:14px;line-height:14px;color:#fff;font-weight:400;white-space:nowrap;border-radius:0"><div style="position:absolute;left:11.40px;top:0;font-size:14px;line-height:14px;transform:translateX(-50%) scaleX(0.86);transform-origin:50% 0">IR</div></div>
<div id="t80" style="position:absolute;left:1100px;top:531.10px;width:105.00px;height:18.2px;overflow:hidden;font-size:14px;line-height:14px;color:#3a3a3a;font-weight:400;white-space:nowrap"><span style="position:absolute;left:48.20px;top:0;">Roose Isa</span></div>
<div id="t81" style="left:426.1px;position:absolute;top:563.30px;font-size:14px;line-height:14px;color:#3a3a3a;font-weight:400;white-space:nowrap;;transform:scaleX(0.9557);transform-origin:1px 0;">20200001</div>
<div id="t82" style="left:508.0px;position:absolute;top:563.30px;font-size:14px;line-height:14px;color:#3a3a3a;font-weight:400;white-space:nowrap;;transform:scaleX(0.9517);transform-origin:1px 0;">MIAM BURGER (Dossier Maître)</div>
<div id="t83" style="left:895.9px;position:absolute;top:562.88px;font-size:14.5px;line-height:14.5px;color:#fff;font-weight:400;white-space:nowrap;-webkit-text-stroke:0.3px #fff;transform:scaleX(0.8351);transform-origin:1px 0;">2.10 VARIA</div>
<div id="t84" style="position:absolute;left:1015px;top:563.10px;width:22.80px;height:18.2px;overflow:hidden;font-size:14px;line-height:14px;color:#fff;font-weight:400;white-space:nowrap;border-radius:0"><div style="position:absolute;left:11.40px;top:0;font-size:14px;line-height:14px;transform:translateX(-50%) scaleX(0.97);transform-origin:50% 0">FLU</div></div>
<div id="t85" style="left:1048.4px;position:absolute;top:563.10px;font-size:14px;line-height:14px;color:#3a3a3a;font-weight:400;white-space:nowrap;;transform:scaleX(1.0660);transform-origin:1px 0;">Lucarelli</div>
<div id="t86" style="position:absolute;left:1115.2px;top:563.10px;width:22.80px;height:18.2px;overflow:hidden;font-size:14px;line-height:14px;color:#fff;font-weight:400;white-space:nowrap;border-radius:0"><div style="position:absolute;left:11.40px;top:0;font-size:14px;line-height:14px;transform:translateX(-50%) scaleX(0.86);transform-origin:50% 0">EH</div></div>
<div id="t87" style="position:absolute;left:1100px;top:563.10px;width:105.00px;height:18.2px;overflow:hidden;font-size:14px;line-height:14px;color:#3a3a3a;font-weight:400;white-space:nowrap"><span style="position:absolute;left:48.20px;top:0;transform:scaleX(0.9);transform-origin:0 0">HEYLEN E</span></div>
<div id="t88" style="left:426.1px;position:absolute;top:595.30px;font-size:14px;line-height:14px;color:#3a3a3a;font-weight:400;white-space:nowrap;;transform:scaleX(0.9472);transform-origin:1px 0;">20200001...</div>
<div id="t89" style="left:508.0px;position:absolute;top:595.30px;font-size:14px;line-height:14px;color:#3a3a3a;font-weight:400;white-space:nowrap;;transform:scaleX(0.8909);transform-origin:1px 0;">MIAM BURGER</div>
<div id="t90" style="left:895.9px;position:absolute;top:594.88px;font-size:14.5px;line-height:14.5px;color:#fff;font-weight:400;white-space:nowrap;-webkit-text-stroke:0.3px #fff;transform:scaleX(0.8351);transform-origin:1px 0;">2.10 VARIA</div>
<div id="t91" style="position:absolute;left:1015px;top:595.10px;width:22.80px;height:18.2px;overflow:hidden;font-size:14px;line-height:14px;color:#fff;font-weight:400;white-space:nowrap;border-radius:0"><div style="position:absolute;left:11.40px;top:0;font-size:14px;line-height:14px;transform:translateX(-50%) scaleX(0.97);transform-origin:50% 0">FLU</div></div>
<div id="t92" style="left:1048.4px;position:absolute;top:595.10px;font-size:14px;line-height:14px;color:#3a3a3a;font-weight:400;white-space:nowrap;;transform:scaleX(1.0660);transform-origin:1px 0;">Lucarelli</div>
<div id="t93" style="position:absolute;left:1115.2px;top:595.10px;width:22.80px;height:18.2px;overflow:hidden;font-size:14px;line-height:14px;color:#fff;font-weight:400;white-space:nowrap;border-radius:0"><div style="position:absolute;left:11.40px;top:0;font-size:14px;line-height:14px;transform:translateX(-50%) scaleX(0.86);transform-origin:50% 0">EH</div></div>
<div id="t94" style="position:absolute;left:1100px;top:595.10px;width:105.00px;height:18.2px;overflow:hidden;font-size:14px;line-height:14px;color:#3a3a3a;font-weight:400;white-space:nowrap"><span style="position:absolute;left:48.20px;top:0;transform:scaleX(0.9);transform-origin:0 0">HEYLEN E</span></div>
<div id="t95" style="left:426.1px;position:absolute;top:627.30px;font-size:14px;line-height:14px;color:#3a3a3a;font-weight:400;white-space:nowrap;;transform:scaleX(0.9472);transform-origin:1px 0;">20200001...</div>
<div id="t96" style="left:508.0px;position:absolute;top:627.30px;font-size:14px;line-height:14px;color:#3a3a3a;font-weight:400;white-space:nowrap;;transform:scaleX(0.9080);transform-origin:1px 0;">MIAM BURGER / HOLY BREAD</div>
<div id="t97" style="left:896.9px;position:absolute;top:626.88px;font-size:14.5px;line-height:14.5px;color:#fff;font-weight:400;white-space:nowrap;-webkit-text-stroke:0.3px #fff;transform:scaleX(0.8557);transform-origin:0px 0;">3.0 DROIT CO...</div>
<div id="t98" style="position:absolute;left:1015px;top:627.10px;width:22.80px;height:18.2px;overflow:hidden;font-size:14px;line-height:14px;color:#fff;font-weight:400;white-space:nowrap;border-radius:0"><div style="position:absolute;left:11.40px;top:0;font-size:14px;line-height:14px;transform:translateX(-50%) scaleX(0.97);transform-origin:50% 0">FLU</div></div>
<div id="t99" style="left:1048.4px;position:absolute;top:627.10px;font-size:14px;line-height:14px;color:#3a3a3a;font-weight:400;white-space:nowrap;;transform:scaleX(1.0660);transform-origin:1px 0;">Lucarelli</div>
<div id="t100" style="position:absolute;left:1115.2px;top:627.10px;width:22.80px;height:18.2px;overflow:hidden;font-size:14px;line-height:14px;color:#fff;font-weight:400;white-space:nowrap;border-radius:0"><div style="position:absolute;left:11.40px;top:0;font-size:14px;line-height:14px;transform:translateX(-50%) scaleX(0.86);transform-origin:50% 0">EH</div></div>
<div id="t101" style="position:absolute;left:1100px;top:627.10px;width:105.00px;height:18.2px;overflow:hidden;font-size:14px;line-height:14px;color:#3a3a3a;font-weight:400;white-space:nowrap"><span style="position:absolute;left:48.20px;top:0;transform:scaleX(0.9);transform-origin:0 0">HEYLEN E</span></div>
<div id="t102" style="left:426.1px;position:absolute;top:659.30px;font-size:14px;line-height:14px;color:#3a3a3a;font-weight:400;white-space:nowrap;;transform:scaleX(0.9066);transform-origin:1px 0;">20209101</div>
<div id="t103" style="left:508.0px;position:absolute;top:659.30px;font-size:14px;line-height:14px;color:#3a3a3a;font-weight:400;white-space:nowrap;;transform:scaleX(0.9063);transform-origin:1px 0;">MIAM BURGER / PORKCHOP</div>
<div id="t104" style="left:895.9px;position:absolute;top:658.88px;font-size:14.5px;line-height:14.5px;color:#fff;font-weight:400;white-space:nowrap;-webkit-text-stroke:0.3px #fff;transform:scaleX(0.9100);transform-origin:1px 0;">2.6 IMMOBILI...</div>
<div id="t105" style="position:absolute;left:1015px;top:659.10px;width:22.80px;height:18.2px;overflow:hidden;font-size:14px;line-height:14px;color:#fff;font-weight:400;white-space:nowrap;border-radius:0"><div style="position:absolute;left:11.40px;top:0;font-size:14px;line-height:14px;transform:translateX(-50%) scaleX(0.97);transform-origin:50% 0">FLU</div></div>
<div id="t106" style="left:1048.4px;position:absolute;top:659.10px;font-size:14px;line-height:14px;color:#3a3a3a;font-weight:400;white-space:nowrap;;transform:scaleX(1.0660);transform-origin:1px 0;">Lucarelli</div>
<div id="t107" style="position:absolute;left:1115.2px;top:659.10px;width:22.80px;height:18.2px;overflow:hidden;font-size:14px;line-height:14px;color:#fff;font-weight:400;white-space:nowrap;border-radius:0"><div style="position:absolute;left:11.40px;top:0;font-size:14px;line-height:14px;transform:translateX(-50%) scaleX(0.86);transform-origin:50% 0">EH</div></div>
<div id="t108" style="position:absolute;left:1100px;top:659.10px;width:105.00px;height:18.2px;overflow:hidden;font-size:14px;line-height:14px;color:#3a3a3a;font-weight:400;white-space:nowrap"><span style="position:absolute;left:48.20px;top:0;transform:scaleX(0.9);transform-origin:0 0">HEYLEN E</span></div>
<div id="t109" style="left:426.1px;position:absolute;top:691.30px;font-size:14px;line-height:14px;color:#3a3a3a;font-weight:400;white-space:nowrap;;transform:scaleX(0.9393);transform-origin:1px 0;">20209102</div>
<div id="t110" style="left:508.0px;position:absolute;top:691.30px;font-size:14px;line-height:14px;color:#3a3a3a;font-weight:400;white-space:nowrap;;transform:scaleX(0.9040);transform-origin:1px 0;">MIAM BURGER / CARBONARA</div>
<div id="t111" style="left:895.9px;position:absolute;top:690.88px;font-size:14.5px;line-height:14.5px;color:#fff;font-weight:400;white-space:nowrap;-webkit-text-stroke:0.3px #fff;transform:scaleX(0.8769);transform-origin:1px 0;">2.0 DROIT CIVIL</div>
<div id="t112" style="position:absolute;left:1015px;top:691.10px;width:22.80px;height:18.2px;overflow:hidden;font-size:14px;line-height:14px;color:#fff;font-weight:400;white-space:nowrap;border-radius:0"><div style="position:absolute;left:11.40px;top:0;font-size:14px;line-height:14px;transform:translateX(-50%) scaleX(0.97);transform-origin:50% 0">FLU</div></div>
<div id="t113" style="left:1048.4px;position:absolute;top:691.10px;font-size:14px;line-height:14px;color:#3a3a3a;font-weight:400;white-space:nowrap;;transform:scaleX(1.0660);transform-origin:1px 0;">Lucarelli</div>
<div id="t114" style="position:absolute;left:1115.2px;top:691.10px;width:22.80px;height:18.2px;overflow:hidden;font-size:14px;line-height:14px;color:#fff;font-weight:400;white-space:nowrap;border-radius:0"><div style="position:absolute;left:11.40px;top:0;font-size:14px;line-height:14px;transform:translateX(-50%) scaleX(0.97);transform-origin:50% 0">FLU</div></div>
<div id="t115" style="position:absolute;left:1100px;top:691.10px;width:105.00px;height:18.2px;overflow:hidden;font-size:14px;line-height:14px;color:#3a3a3a;font-weight:400;white-space:nowrap"><span style="position:absolute;left:48.20px;top:0;">Lucarelli</span></div>
<div id="t116" style="left:427.1px;position:absolute;top:723.30px;font-size:14px;line-height:14px;color:#3a3a3a;font-weight:400;white-space:nowrap;;transform:scaleX(0.9159);transform-origin:0px 0;">WK180004</div>
<div id="t117" style="left:509.0px;position:absolute;top:723.30px;font-size:14px;line-height:14px;color:#3a3a3a;font-weight:400;white-space:nowrap;;transform:scaleX(0.8925);transform-origin:0px 0;">VANDENBROECK / MIAM BURGER</div>
<div id="t118" style="left:896.9px;position:absolute;top:722.88px;font-size:14.5px;line-height:14.5px;color:#fff;font-weight:400;white-space:nowrap;-webkit-text-stroke:0.3px #fff;transform:scaleX(0.8388);transform-origin:0px 0;">0. GÉNÉRAL</div>
<div id="t119" style="position:absolute;left:1015px;top:723.10px;width:22.80px;height:18.2px;overflow:hidden;font-size:14px;line-height:14px;color:#fff;font-weight:400;white-space:nowrap;border-radius:0"><div style="position:absolute;left:11.40px;top:0;font-size:14px;line-height:14px;transform:translateX(-50%) scaleX(0.97);transform-origin:50% 0">FLU</div></div>
<div id="t120" style="left:1048.4px;position:absolute;top:723.10px;font-size:14px;line-height:14px;color:#3a3a3a;font-weight:400;white-space:nowrap;;transform:scaleX(1.0660);transform-origin:1px 0;">Lucarelli</div>
<div id="t121" style="position:absolute;left:1115.2px;top:723.10px;width:22.80px;height:18.2px;overflow:hidden;font-size:14px;line-height:14px;color:#fff;font-weight:400;white-space:nowrap;border-radius:0"><div style="position:absolute;left:11.40px;top:0;font-size:14px;line-height:14px;transform:translateX(-50%) scaleX(0.97);transform-origin:50% 0">TE9</div></div>
<div id="t122" style="position:absolute;left:1100px;top:723.10px;width:105.00px;height:18.2px;overflow:hidden;font-size:14px;line-height:14px;color:#3a3a3a;font-weight:400;white-space:nowrap"><span style="position:absolute;left:48.20px;top:0;">Wolters K</span></div>
<div id="t123" style="left:1259.5px;position:absolute;top:55.10px;font-size:20px;line-height:20px;color:#3a3a3a;font-weight:700;white-space:nowrap;white-space:pre;transform:scaleX(0.9408);transform-origin:1px 0;">05001478  -  MIAM BURGER / POULET</div>
<div id="t124" style="left:1263.2px;position:absolute;top:78.40px;font-size:14px;line-height:14px;color:#333;font-weight:700;white-space:nowrap;;transform:scaleX(0.9345);transform-origin:1px 0;">YELOP René</div>
<div id="t125" style="left:1260.6px;position:absolute;top:94.90px;font-size:14px;line-height:14px;color:#333;font-weight:700;white-space:nowrap;;transform:scaleX(0.8413);transform-origin:0px 0;">2.1 BAUX</div>
<div id="t126" style="left:1260.6px;position:absolute;top:111.90px;font-size:14px;line-height:14px;color:#333;font-weight:700;white-space:nowrap;;transform:scaleX(0.9534);transform-origin:0px 0;">Tit. : FLU | Resp. : IR | Co-resp. : EH</div>
<div id="t127" style="left:1268.0px;position:absolute;top:133.10px;font-size:14px;line-height:14px;color:#444;font-weight:400;white-space:nowrap;;transform:scaleX(0.8667);transform-origin:1px 0;">GSM</div>
<div id="t128" style="left:1302.8px;position:absolute;top:133.10px;font-size:14px;line-height:14px;color:#3d8fd1;font-weight:400;white-space:nowrap;;">:</div>
<div id="t129" style="left:1314.1px;position:absolute;top:133.10px;font-size:14px;line-height:14px;color:#3d8fd1;font-weight:400;white-space:nowrap;;transform:scaleX(0.9102);transform-origin:1px 0;">+32 475 65 59 03</div>
<div id="t130" style="left:1423.6px;position:absolute;top:133.10px;font-size:14px;line-height:14px;color:#444;font-weight:400;white-space:nowrap;;transform:scaleX(1.0455);transform-origin:1px 0;">Email</div>
<div id="t131" style="left:1467.1px;position:absolute;top:133.10px;font-size:14px;line-height:14px;color:#3d8fd1;font-weight:400;white-space:nowrap;;">:</div>
<div id="t132" style="left:1476.9px;position:absolute;top:133.10px;font-size:14px;line-height:14px;color:#3d8fd1;font-weight:400;white-space:nowrap;;transform:scaleX(1.0399);transform-origin:1px 0;">dlex.support@wolterskluwer.com</div>
<div id="t133" style="left:1265.3px;position:absolute;top:160.10px;font-size:14px;line-height:14px;color:#444;font-weight:400;white-space:nowrap;white-space:pre;transform:scaleX(0.9417);transform-origin:0px 0;">Adresse  :  Grand Place, 3 1480 TUBIZE</div>
<div id="t134" style="left:1321.5px;position:absolute;top:191.08px;font-size:14.5px;line-height:14.5px;color:#222;font-weight:400;white-space:nowrap;;transform:scaleX(0.9784);transform-origin:1px 0;">Notes</div>
<div id="t135" style="left:1410.6px;position:absolute;top:191.08px;font-size:14.5px;line-height:14.5px;color:#1b7dc4;font-weight:400;white-space:nowrap;;transform:scaleX(0.9778);transform-origin:0px 0;">Aperçu</div>
<div id="t136" style="left:1506.0px;position:absolute;top:191.08px;font-size:14.5px;line-height:14.5px;color:#222;font-weight:400;white-space:nowrap;;transform:scaleX(0.9646);transform-origin:1px 0;">Champs extras</div>
<div id="t137" style="left:1651.2px;position:absolute;top:191.08px;font-size:14.5px;line-height:14.5px;color:#222;font-weight:400;white-space:nowrap;;transform:scaleX(1.0119);transform-origin:1px 0;">Partie/Co</div>
<div id="t138" style="left:1274.6px;position:absolute;top:249.15px;font-size:21px;line-height:21px;color:#444;font-weight:400;white-space:nowrap;;transform:scaleX(1.1029);transform-origin:2px 0;">Prestations</div>
<div id="t139" style="left:1270.6px;position:absolute;top:289.30px;font-size:14px;line-height:14px;color:#444;font-weight:400;white-space:nowrap;;transform:scaleX(1.0187);transform-origin:1px 0;">Éléments trouvés</div>
<div id="t140" style="left:1466.3px;position:absolute;top:289.30px;font-size:14px;line-height:14px;color:#333;font-weight:700;white-space:nowrap;;transform:scaleX(0.9786);transform-origin:1px 0;">18</div>
<div id="t141" style="left:1271.6px;position:absolute;top:316.30px;font-size:14px;line-height:14px;color:#444;font-weight:400;white-space:nowrap;;transform:scaleX(1.0448);transform-origin:0px 0;">Total</div>
<div id="t142" style="left:1429.6px;position:absolute;top:316.30px;font-size:14px;line-height:14px;color:#333;font-weight:700;white-space:nowrap;;transform:scaleX(0.9509);transform-origin:1px 0;">571,33 €</div>
<div id="t143" style="left:1271.6px;position:absolute;top:343.30px;font-size:14px;line-height:14px;color:#444;font-weight:400;white-space:nowrap;;transform:scaleX(1.0566);transform-origin:0px 0;">Total interne</div>
<div id="t144" style="left:1428.6px;position:absolute;top:343.30px;font-size:14px;line-height:14px;color:#333;font-weight:700;white-space:nowrap;;transform:scaleX(0.9698);transform-origin:1px 0;">393,31 €</div>
<div id="t145" style="left:1270.6px;position:absolute;top:370.30px;font-size:14px;line-height:14px;color:#444;font-weight:400;white-space:nowrap;;transform:scaleX(1.0000);transform-origin:1px 0;">Durée</div>
<div id="t146" style="left:1446.3px;position:absolute;top:370.30px;font-size:14px;line-height:14px;color:#333;font-weight:700;white-space:nowrap;;transform:scaleX(0.9912);transform-origin:1px 0;">03:50</div>
<div id="t147" style="left:1276.2px;position:absolute;top:394.35px;font-size:21px;line-height:21px;color:#444;font-weight:400;white-space:nowrap;;transform:scaleX(1.0520);transform-origin:0px 0;">Tâches non clôturées</div>
<div id="t148" style="left:1468.3px;position:absolute;top:435.70px;font-size:14px;line-height:14px;color:#444;font-weight:400;white-space:nowrap;;transform:scaleX(1.0215);transform-origin:1px 0;">Éléments trouvés</div>
<div id="t149" style="left:1336.1px;position:absolute;top:492.22px;font-size:15.5px;line-height:15.5px;color:#222;font-weight:400;white-space:nowrap;;transform:scaleX(1.1571);transform-origin:1px 0;">0</div>
<div id="t150" style="left:1274.4px;position:absolute;top:585.05px;font-size:21px;line-height:21px;color:#444;font-weight:400;white-space:nowrap;;transform:scaleX(1.0951);transform-origin:2px 0;">Facturation</div>
<div id="t151" style="left:1469.3px;position:absolute;top:626.50px;font-size:14px;line-height:14px;color:#444;font-weight:400;white-space:nowrap;;transform:scaleX(0.9808);transform-origin:0px 0;">Total HT</div>
<div id="t152" style="left:1335.4px;position:absolute;top:682.33px;font-size:15.5px;line-height:15.5px;color:#222;font-weight:400;white-space:nowrap;;transform:scaleX(1.2286);transform-origin:1px 0;">0</div>
<div id="t153" style="left:1275.4px;position:absolute;top:774.65px;font-size:21px;line-height:21px;color:#444;font-weight:400;white-space:nowrap;;transform:scaleX(1.0694);transform-origin:1px 0;">Compte de tiers</div>
<div id="t154" style="left:1453.6px;position:absolute;top:815.40px;font-size:14px;line-height:14px;color:#222;font-weight:400;white-space:nowrap;;transform:scaleX(1.1621);transform-origin:0px 0;">Total</div>
<div id="t155" style="left:1335.4px;position:absolute;top:872.23px;font-size:15.5px;line-height:15.5px;color:#222;font-weight:400;white-space:nowrap;;transform:scaleX(1.2286);transform-origin:1px 0;">0</div>
</div>
</body></html>
